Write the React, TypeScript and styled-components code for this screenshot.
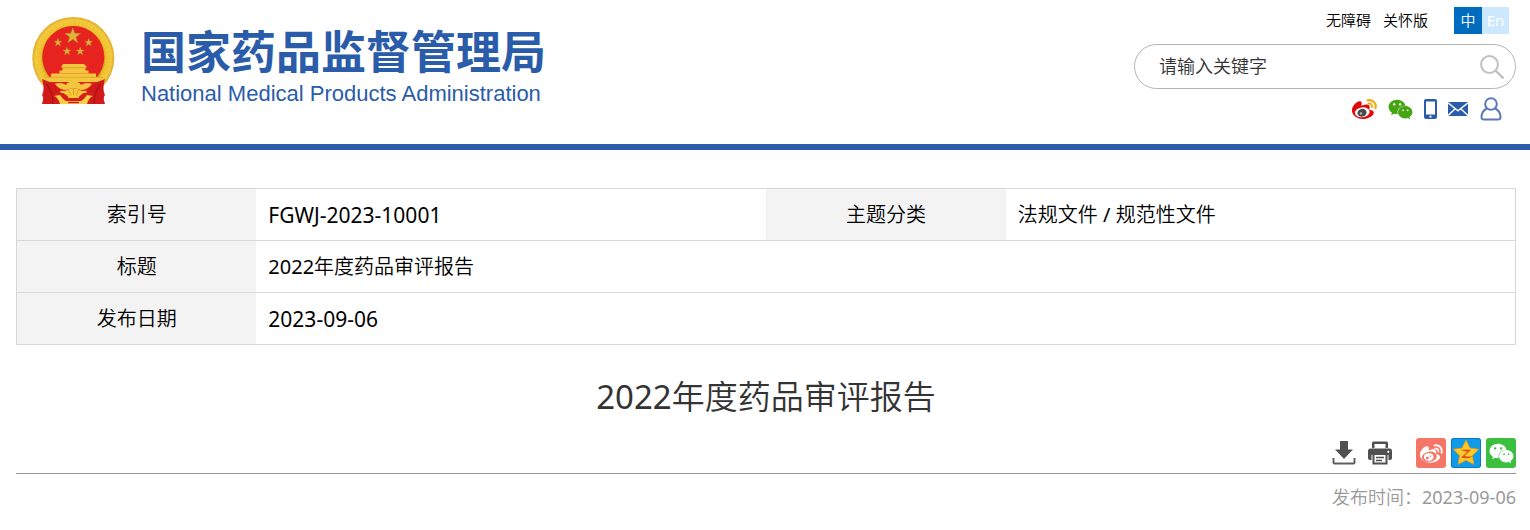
import React from "react";
import styled, { createGlobalStyle } from "styled-components";
import { FaWeixin } from "react-icons/fa";

const GlobalStyle = createGlobalStyle`
  * { box-sizing: border-box; }
  body {
    margin: 0;
    background: #fff;
    color: #000;
    font-family: "Noto Sans", "Noto Sans CJK SC DemiLight", "Noto Sans CJK SC", sans-serif;
    font-weight: 400;
  }
  a { color: inherit; text-decoration: none; }
  button { font: inherit; border: 0; padding: 0; background: none; cursor: pointer; }
  svg { display: block; }
`;

const BLUE = "#2a5caa";

const Header = styled.header`
  display: flex;
  justify-content: space-between;
  align-items: flex-start;
  height: 150px;
  padding: 7px 14px 0 32px;
  border-bottom: 6px solid ${BLUE};
`;

const Brand = styled.a`
  display: flex;
  gap: 26px;
  padding-top: 10px;
  color: ${BLUE};
`;

const BrandText = styled.div`
  display: flex;
  flex-direction: column;
  padding-top: 8px;
`;

const BrandName = styled.span`
  font: 700 45px/50px "Noto Sans CJK SC", sans-serif;
  white-space: nowrap;
`;

const BrandSub = styled.span`
  font: 400 22px/38px "Liberation Sans", sans-serif;
  white-space: nowrap;
`;

const Tools = styled.div`
  display: flex;
  flex-direction: column;
  width: 382px;
`;

const TopLinks = styled.nav`
  display: flex;
  align-items: center;
  justify-content: flex-end;
  gap: 12px;
  padding-right: 7px;
  font-size: 15px;
  line-height: 27px;
`;

const LangSwitch = styled.div`
  display: flex;
  margin-left: 14px;
`;

const LangButton = styled.button<{ $active?: boolean }>`
  width: ${(p) => (p.$active ? 28 : 27)}px;
  height: 27px;
  line-height: 27px;
  color: #fff;
  background: ${(p) => (p.$active ? "#006cbf" : "#cce8ff")};
`;

const SearchBox = styled.form`
  display: flex;
  align-items: center;
  height: 45px;
  margin: 10px 0 8px;
  padding: 0 11px 0 24px;
  border: 1px solid #b4b4b4;
  border-radius: 23px;
`;

const SearchInput = styled.input`
  flex: 1;
  min-width: 0;
  padding: 0 0 2px;
  border: 0;
  outline: 0;
  background: none;
  font: inherit;
  font-size: 18px;
  line-height: 26px;
  color: #333;
  &::placeholder { color: #333; opacity: 1; }
`;

const Social = styled.nav`
  display: flex;
  align-items: center;
  justify-content: flex-end;
  gap: 11px;
  height: 24px;
  padding-right: 13px;
`;

const Main = styled.main`
  padding: 38px 14px 0 16px;
`;

const InfoTable = styled.table`
  width: 100%;
  table-layout: fixed;
  border-collapse: collapse;
  border: 1px solid #d7d7d7;
  font-size: 20px;
  line-height: 28px;
`;

const Row = styled.tr`
  height: 52px;
  border-bottom: 1px solid #d7d7d7;
`;

const Label = styled.th`
  width: 16%;
  padding: 0;
  background: #f3f3f3;
  font-weight: inherit;
`;

const Value = styled.td<{ $numeric?: boolean }>`
  padding: 0 12px;
  font-size: ${(p) => (p.$numeric ? 21 : 20)}px;
`;

const Title = styled.h1`
  margin: 28px 0 17px;
  color: #333;
  font-size: 33px;
  line-height: 48px;
  font-weight: inherit;
  text-align: center;
`;

const Actions = styled.div`
  display: flex;
  align-items: center;
  justify-content: flex-end;
  gap: 12px;
  padding-bottom: 5px;
  border-bottom: 1px solid #999;
`;

const Share = styled.div`
  display: flex;
  gap: 5px;
  margin-left: 12px;
`;

const ShareButton = styled.button<{ $bg: string }>`
  display: flex;
  align-items: center;
  justify-content: center;
  width: 30px;
  height: 30px;
  border-radius: 3px;
  background: ${(p) => p.$bg};
  color: #fff;
`;

const Published = styled.p`
  margin: 10px 0 0;
  color: #999;
  font-size: 18px;
  line-height: 26px;
  text-align: right;
`;

function star(cx: number, cy: number, r: number, inner = 0.4) {
  return Array.from({ length: 10 }, (_, i) => {
    const d = i % 2 ? r * inner : r;
    const a = (Math.PI / 5) * i - Math.PI / 2;
    return `${(cx + d * Math.cos(a)).toFixed(2)},${(cy + d * Math.sin(a)).toFixed(2)}`;
  }).join(" ");
}

const Emblem = () => (
  <svg width="83" height="88" viewBox="0 0 83 88" aria-hidden="true">
    <defs>
      <radialGradient id="gold" cx="50%" cy="50%" r="50%">
        <stop offset="0.74" stopColor="#c99a1c" />
        <stop offset="0.8" stopColor="#f0c330" />
        <stop offset="0.92" stopColor="#f3cc3e" />
        <stop offset="1" stopColor="#dfa92b" />
      </radialGradient>
    </defs>
    <circle cx="41.3" cy="41" r="41" fill="url(#gold)" />
    <circle cx="41.3" cy="41" r="35.5" fill="none" stroke="#e2b02c" strokeWidth="5" strokeDasharray="1 3" opacity="0.3" />
    <circle cx="41.3" cy="40" r="31" fill="#e6231e" />
    <g fill="#dcb43c" stroke="#b98a2a" strokeWidth="0.4">
      <polygon points={star(40.8, 19, 8.2)} />
      <polygon points={star(26, 25.5, 4.2)} />
      <polygon points={star(56.7, 25.5, 4.2)} />
      <polygon points={star(35, 34.3, 4.2)} />
      <polygon points={star(48.2, 34.3, 4.2)} />
    </g>
    <path d="M31 47h21l3 3-1.500 1v2.500h3v3h-29v-3h3V51l-1.500-1z" fill="#f2c63e" />
    <path d="M30 50.800h23" stroke="#d88d20" strokeWidth="0.7" />
    <path d="M19 56.500h45v3.500h8l-3 6H14l-3-6h8z" fill="#f2c63e" />
    <path d="M12 60.300h59" stroke="#dd9a24" strokeWidth="0.7" />
    <path d="M14 65h55q-7 8-15 9H29q-9-1-15-9z" fill="#e6231e" />
    <path d="M10 62c7 3 12 4 17 9l6 16H10c1-4 2-6 0-9 2-4 2-9 0-16z" fill="#d11b1a" />
    <path d="M73 62c-7 3-12 4-17 9l-6 16h23c-1-4-2-6 0-9-2-4-2-9 0-16z" fill="#d11b1a" />
    <path d="M14 67c5 5 7 11 7 20M69 67c-5 5-7 11-7 20" fill="none" stroke="#ab1212" strokeWidth="1.200" />
    <path d="M22 76h39l-6 11H28z" fill="#d81f1b" />
    <path d="M23 67c4-2 8-1 11 1 2-5 13-5 15 0 3-2 7-3 11-1-3 4-7 6-11 6-3-2-12-2-15 0-4 0-8-2-11-6z" fill="#f2c63e" />
    <path d="M31.500 76c3-6 17-6 20 0l-4 3-1 2h-10l-1-2z" fill="#f5c93a" />
    <path d="M36.500 73.500l2.500 5M41.500 72v6M46.500 73.500l-2.500 5" stroke="#d88d20" strokeWidth="0.700" />
    <path d="M22 79l6-1c2 3 4 5 6 6h15c2-1 4-3 6-6l6 1c-3 1-5 4-6 8H28c-1-4-3-7-6-8z" fill="#f5d049" />
    <path d="M36 85.500h11" stroke="#d11b1a" strokeWidth="1.500" />
  </svg>
);

const EYE = "M10.100 9c-4.300.4-8 3-8 6.300 0 3.200 3.700 5.200 8.300 4.800s8-3 7.700-6.200C17.800 10.600 14.400 8.600 10.100 9z";
const BODY =
  "M17.800 11.700c-.5-.1-.8-.2-.6-.8.6-1.400.7-2.500 0-3.300-1.200-1.600-4.100-1.300-7-.1 0 0-1.100.4-.8-.4.500-1.500.4-2.700-.3-3.400C7.400 2.100 3.600 4.500 1.800 7.200.5 9.100-.7 11 .1 13.800 1 18.300 6 21 10.600 21c6 0 11.200-3.400 11.200-6.300 0-1.700-1.500-2.600-4-3z";

const WeiboColor = () => (
  <svg width="25" height="22" viewBox="0 0 25 22" aria-hidden="true">
    <path d={BODY} fill="#e0080c" />
    <ellipse cx="10.300" cy="14.300" rx="7.400" ry="4.900" fill="#fff" transform="rotate(-8 10.300 14.300)" />
    <ellipse cx="10" cy="14.700" rx="4.600" ry="3.900" fill="#4a4a4a" transform="rotate(-12 10 14.700)" />
    <circle cx="9" cy="15.400" r="1.200" fill="#bbb" />
    <path d="M15.800 2.200c4.900-1 9 3 7.600 8" fill="none" stroke="#f2ac0c" strokeWidth="2.200" strokeLinecap="round" />
    <path d="M16.500 5.600c2.300-.5 4.100 1.400 3.400 3.600" fill="none" stroke="#f2ac0c" strokeWidth="1.800" strokeLinecap="round" />
  </svg>
);

const WeiboWhite = () => (
  <svg width="23" height="21" viewBox="0 0 25 22" aria-hidden="true">
    <path d={BODY} fill="#fff" />
    <path d={EYE} fill="#f57666" />
    <ellipse cx="9.500" cy="14.800" rx="5.300" ry="4.400" fill="#fff" />
    <circle cx="8" cy="16" r="1.600" fill="#f57666" />
    <circle cx="11.200" cy="14" r="0.800" fill="#f57666" />
    <path d="M15.800 2.200c4.900-1 9 3 7.600 8" fill="none" stroke="#fff" strokeWidth="2" strokeLinecap="round" />
    <path d="M16.500 5.600c2.300-.5 4.100 1.400 3.400 3.600" fill="none" stroke="#fff" strokeWidth="1.700" strokeLinecap="round" />
  </svg>
);

const PhoneIcon = () => (
  <svg width="13" height="22" viewBox="0 0 13 22" aria-hidden="true">
    <rect y="1" width="13" height="20" rx="2" fill={BLUE} />
    <rect x="2" y="3.500" width="9" height="13" fill="#fff" />
    <circle cx="6.500" cy="18.700" r="1.100" fill="#fff" />
  </svg>
);

const MailIcon = () => (
  <svg width="20" height="14" viewBox="0 0 20 14" aria-hidden="true">
    <rect width="20" height="14" fill={BLUE} />
    <path d="M0 .8l10 8 10-8M0 13.500l7-6.500M20 13.500L13 7" fill="none" stroke="#fff" strokeWidth="1.400" />
  </svg>
);

const UserIcon = () => (
  <svg width="24" height="24" viewBox="0 0 24 24" fill="none" stroke="#5b78b8" strokeWidth="2" aria-hidden="true">
    <circle cx="12" cy="7" r="5.800" />
    <path d="M8 11.500C4.500 13 2.600 16 2.500 20q0 2.500 2.500 2.500h14q2.500 0 2.500-2.500c-.1-4-2-7-5.500-8.500" />
  </svg>
);

const SearchIcon = () => (
  <svg width="24" height="24" viewBox="0 0 24 24" fill="none" stroke="#c0c0c0" strokeWidth="2" aria-hidden="true">
    <circle cx="9.500" cy="9.500" r="8.400" />
    <path d="M15.500 15.500l8 8" strokeWidth="2.400" />
  </svg>
);

const DownloadIcon = () => (
  <svg width="24" height="24" viewBox="0 0 24 24" aria-hidden="true">
    <path d="M8 0h8v8.500h5L12 18 3 8.500h5z" fill="#505050" />
    <path d="M1.500 17v4.500q0 1 1 1h19q1 0 1-1V17" fill="none" stroke="#606060" strokeWidth="2" />
  </svg>
);

const PrintIcon = () => (
  <svg width="24" height="24" viewBox="0 0 24 24" aria-hidden="true">
    <path d="M4 7V2q0-1.500 1.500-1.500h13Q20 .5 20 2v5h-2.500V3h-11v4z" fill="#505050" />
    <path d="M2.500 7.500h19Q24 7.500 24 10v7q0 2-2 2h-1.500v-5h-17v5H2q-2 0-2-2v-7q0-2.500 2.500-2.500z" fill="#505050" />
    <circle cx="20.300" cy="10.800" r="1.100" fill="#fff" />
    <path d="M5.500 14v8.500h13V14" fill="#fff" stroke="#505050" strokeWidth="2" />
    <path d="M8 16.500h8M8 19.500h6" stroke="#505050" strokeWidth="1.500" />
  </svg>
);

const QzoneIcon = () => (
  <svg width="30" height="30" viewBox="0 0 30 30" aria-hidden="true">
    <rect x="0.500" y="0.500" width="29" height="29" rx="2.500" fill="none" stroke="#0a78c8" />
    <polygon points={star(15, 15.5, 13.5, 0.5)} fill="#fdc928" stroke="#e9951a" strokeWidth="0.8" strokeLinejoin="round" />
    <path d="M9.500 12c3-.8 7.500-.8 10.500 0L13.500 18c3 .6 5.500.7 8.500.2-3.500 2.200-8 2.500-12 1.300L16.500 13.700c-2-.4-4.500-.8-7-1.700z" fill="#d9501c" />
  </svg>
);

export default function App() {
  return (
    <>
      <GlobalStyle />
      <Header>
        <Brand href="#">
          <Emblem />
          <BrandText>
            <BrandName>国家药品监督管理局</BrandName>
            <BrandSub>National Medical Products Administration</BrandSub>
          </BrandText>
        </Brand>
        <Tools>
          <TopLinks>
            <a href="#">无障碍</a>
            <a href="#">关怀版</a>
            <LangSwitch>
              <LangButton type="button" $active>中</LangButton>
              <LangButton type="button">En</LangButton>
            </LangSwitch>
          </TopLinks>
          <SearchBox role="search">
            <SearchInput type="text" placeholder="请输入关键字" aria-label="请输入关键字" />
            <button type="button" aria-label="搜索"><SearchIcon /></button>
          </SearchBox>
          <Social>
            <a href="#" aria-label="微博"><WeiboColor /></a>
            <a href="#" aria-label="微信"><FaWeixin size={25} color="#45a513" /></a>
            <a href="#" aria-label="手机版"><PhoneIcon /></a>
            <a href="#" aria-label="邮箱"><MailIcon /></a>
            <a href="#" aria-label="个人中心"><UserIcon /></a>
          </Social>
        </Tools>
      </Header>
      <Main>
        <InfoTable>
          <tbody>
            <Row>
              <Label scope="row">索引号</Label>
              <Value $numeric>FGWJ-2023-10001</Value>
              <Label scope="row">主题分类</Label>
              <Value>法规文件 / 规范性文件</Value>
            </Row>
            <Row>
              <Label scope="row">标题</Label>
              <Value colSpan={3}>2022年度药品审评报告</Value>
            </Row>
            <Row>
              <Label scope="row">发布日期</Label>
              <Value colSpan={3} $numeric>2023-09-06</Value>
            </Row>
          </tbody>
        </InfoTable>
        <Title>2022年度药品审评报告</Title>
        <Actions>
          <button type="button" aria-label="下载"><DownloadIcon /></button>
          <button type="button" aria-label="打印"><PrintIcon /></button>
          <Share>
            <ShareButton type="button" $bg="#f57666" aria-label="分享到微博"><WeiboWhite /></ShareButton>
            <ShareButton type="button" $bg="#0f9be8" aria-label="分享到QQ空间"><QzoneIcon /></ShareButton>
            <ShareButton type="button" $bg="#3bbf3f" aria-label="分享到微信"><FaWeixin size={25} /></ShareButton>
          </Share>
        </Actions>
        <Published>发布时间：2023-09-06</Published>
      </Main>
    </>
  );
}
